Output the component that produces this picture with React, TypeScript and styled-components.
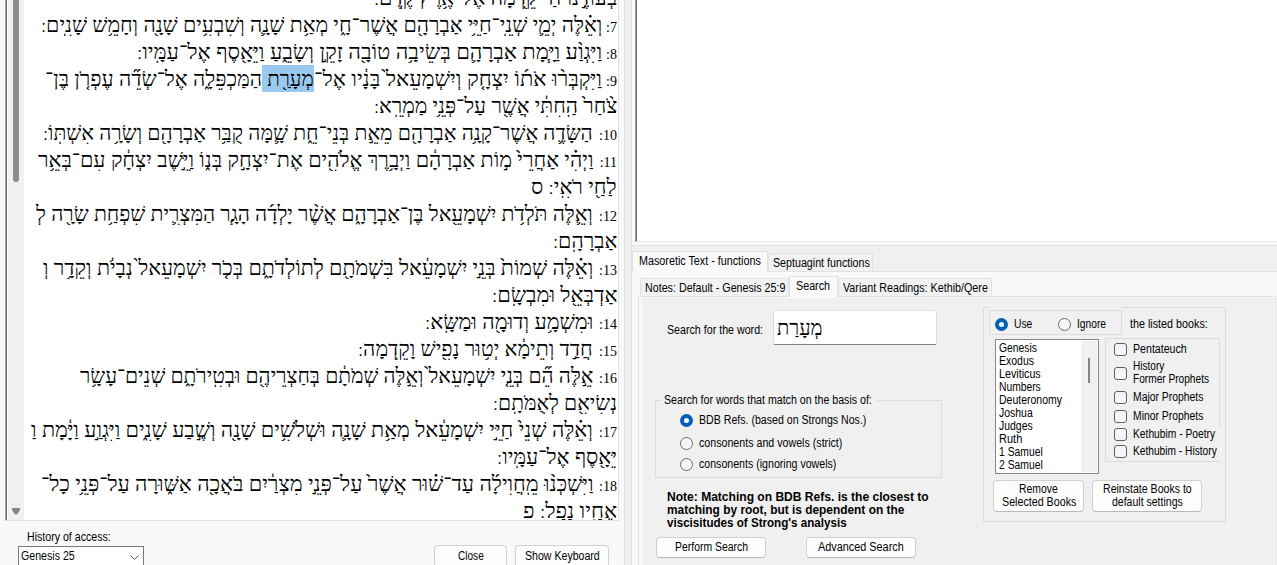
import React, { useLayoutEffect, useRef, useState } from "react";
import styled, { createGlobalStyle } from "styled-components";

const GlobalStyle = createGlobalStyle`
  * { box-sizing: border-box; }
  html, body { margin: 0; padding: 0; }
  body {
    width: 1277px; height: 565px; overflow: hidden; background: #f0f0f0; color: #000;
    font: 12px/13px "Liberation Sans", Arial, sans-serif;
  }
`;

/* Text condensed or widened to an exact advance width. */
const FitBox = styled.span<{ $w: number }>`
  display: block; flex: none; width: ${p => p.$w}px; white-space: pre;
`;
const FitInner = styled.span<{ $rtl?: boolean }>`
  display: inline-block; white-space: pre;
  transform-origin: ${p => (p.$rtl ? "right" : "left")} center;
`;
function Fit({ w, rtl, children }: { w: number; rtl?: boolean; children: React.ReactNode }) {
  const ref = useRef<HTMLSpanElement>(null);
  const [scale, setScale] = useState(1);
  useLayoutEffect(() => {
    const natural = ref.current?.offsetWidth;
    if (natural) setScale(w / natural);
  }, [w]);
  return (
    <FitBox $w={w}>
      <FitInner ref={ref} $rtl={rtl} style={{ transform: `scaleX(${scale})` }}>{children}</FitInner>
    </FitBox>
  );
}

const Window = styled.div`display: flex; width: 1277px; height: 565px; overflow: hidden;`;

const ReaderPane = styled.section`
  width: 625px; flex: none; background: #f9f9f9; border-right: 1px solid #e3e3e3;
  display: flex; flex-direction: column;
`;
const TextView = styled.div`
  margin-left: 5px; width: 614px; height: 521px; display: flex; background: #fff;
  border-left: 1px solid #a0a0a0; border-right: 1px solid #e3e3e3; border-bottom: 1px solid #e3e3e3;
  box-shadow: inset 1px 0 #696969; padding-left: 2px;
`;
const Track = styled.div`
  width: 16px; background: #f0f0f0; display: flex; flex-direction: column;
  align-items: center; justify-content: space-between; flex: none;
`;
const Thumb = styled.div`width: 6px; height: 182px; background: #8b8b8b; border-radius: 0 0 3px 3px;`;
const Verses = styled.div`
  flex: 1; height: 520px; overflow: hidden; direction: rtl; padding-right: 1px;
`;
const VerseBody = styled.div`margin-top: -16px;`;
const Line = styled.div`
  display: flex; height: 27px; line-height: 29px; align-items: baseline;
  font-family: "Liberation Serif", "Times New Roman", serif; font-size: 21px;
`;
const VerseNo = styled.span<{ $w: number }>`
  flex: none; width: ${p => p.$w}px; font-size: 14px; line-height: 29px;
`;
const Selected = styled.mark`
  display: block; height: 27px; background: #99c9ef; color: inherit; white-space: pre;
`;
const VerseEnd = styled.span`
  display: inline-block; font: 17px/20px "DejaVu Sans", sans-serif;
`;
const ReaderFooter = styled.div`display: flex; padding: 9px 0 0 18px; height: 60px;`;
const History = styled.div`width: 416px;`;
const HistoryLabel = styled.div`padding: 1px 0 0 9px; height: 16px;`;
const Combo = styled.div`
  width: 126px; height: 24px; border: 1px solid #7a7a7a; background: #fff;
  display: flex; align-items: flex-start; justify-content: space-between; padding: 3px 4px 0 2px;
`;
const ButtonRow = styled.div`display: flex; gap: 8px; padding-top: 15px;`;

const Button = styled.button<{ $w: number; $h: number }>`
  width: ${p => p.$w}px; height: ${p => p.$h}px; flex: none; padding: 0; font: inherit; color: #000;
  background: #fdfdfd; border: 1px solid #d0d0d0; border-bottom-color: #bababa; border-radius: 4px;
  display: flex; flex-direction: column; align-items: center; justify-content: center;
`;

const RightPane = styled.section`
  flex: 1; margin-left: 6px; border-left: 1px solid #e3e3e3; display: flex; flex-direction: column;
`;
const Viewer = styled.div`
  height: 246px; background: #f9f9f9; border-bottom: 1px solid #e3e3e3; padding: 0 0 3px 3px; flex: none;
`;
const ViewerBody = styled.div`
  height: 242px; background: #fff; border-left: 1px solid #a0a0a0; border-bottom: 1px solid #e3e3e3;
  box-shadow: inset 1px 0 #696969;
`;
const TabStrip = styled.div<{ $top: number; $left: number }>`
  display: flex; align-items: flex-end; padding: ${p => p.$top}px 0 0 ${p => p.$left}px;
`;
const Tab = styled.div<{ $w: number; $on?: boolean }>`
  width: ${p => p.$w}px; height: ${p => (p.$on ? 21 : 18)}px; flex: none;
  margin-bottom: ${p => (p.$on ? -1 : 0)}px; position: relative;
  background: ${p => (p.$on ? "#f9f9f9" : "#f2f2f2")};
  border: 1px solid #e2e2e2; border-bottom: 0;
  padding: 3px 0 0 ${p => (p.$on ? 6 : 4)}px;
`;
const OuterPage = styled.div`
  flex: 1; background: #f9f9f9; border-top: 1px solid #e2e2e2;
  display: flex; flex-direction: column;
`;
const InnerPage = styled.div`
  flex: 1; margin: 0 1px 0 6px; border: 1px solid #e2e2e2; border-bottom: 0;
  padding: 1px 1px 0 3px; display: flex;
`;
const SearchPanel = styled.div`flex: 1; background: #f0f0f0; display: flex; align-items: flex-start;`;
const SearchColumn = styled.div`width: 341px; flex: none; padding: 12px 0 0 13px;`;
const WordRow = styled.div`display: flex; align-items: flex-start; height: 35px; padding-left: 12px; gap: 10px;`;
const WordLabel = styled.div`padding-top: 14px;`;
const WordInput = styled.div`
  width: 164px; height: 35px; background: #fff; border: 1px solid #dedede;
  border-bottom-color: #808080; border-radius: 2px; padding: 4px 0 0 3px;
  font: 21px/27px "Liberation Serif", serif;
`;
const MatchGroup = styled.fieldset`
  width: 287px; height: 84px; margin: 49px 0 0; padding: 0; border: 1px solid #dcdcdc; min-width: 0;
`;
const Legend = styled.legend`margin-left: 5px; padding: 0 5px 0 3px; height: 13px;`;
const Choice = styled.label<{ $top?: number; $left?: number; $gap?: number }>`
  display: flex; align-items: center; gap: ${p => p.$gap ?? 6}px;
  margin-top: ${p => p.$top ?? 0}px; margin-left: ${p => p.$left ?? 0}px;
`;
const Radio = styled.i<{ $on?: boolean }>`
  width: 13px; height: 13px; flex: none; border-radius: 50%;
  border: ${p => (p.$on ? "4px solid #005fb8" : "1px solid #6a6a6a")};
  background: ${p => (p.$on ? "#fff" : "#f6f6f6")};
`;
const Check = styled.i`
  width: 13px; height: 13px; flex: none; border: 1px solid #5f5f5f; border-radius: 3px; background: #f6f6f6;
`;
const Note = styled.div`font-weight: bold; padding: 13px 0 0 12px; height: 59px;`;
const SearchButtons = styled.div`display: flex; gap: 40px; padding-left: 1px;`;

const BooksGroup = styled.div`
  width: 243px; height: 215px; margin-top: 9px; flex: none; padding: 0 0 0 5px;
  border: 1px solid #dcdcdc; border-top: 0;
  background: linear-gradient(#dcdcdc, #dcdcdc) left top / 5px 1px no-repeat,
    linear-gradient(#dcdcdc, #dcdcdc) right top / 104px 1px no-repeat;
`;
const ScopeRow = styled.div`display: flex; padding-top: 3px; gap: 8px; align-items: center;`;
const ScopeBox = styled.div`
  width: 133px; height: 25px; border: 1px solid #dcdcdc; display: flex; align-items: center; padding: 3px 0 0 5px;
`;
const BooksRow = styled.div`display: flex; padding: 3px 0 0 6px; gap: 6px; align-items: flex-start;`;
const BookList = styled.div`
  width: 104px; height: 135px; margin-top: 1px; background: #fff; border: 1px solid #828790;
  display: flex; justify-content: space-between; padding: 1px;
`;
const BookNames = styled.div`padding: 1px 0 0 2px;`;
const ListTrack = styled.div`width: 16px; background: #f0f0f0; padding: 17px 0 0 7px;`;
const ListThumb = styled.div`width: 2px; height: 25px; background: #858585;`;
const CategoryBox = styled.div`
  width: 115px; height: 124px; border: 1px solid #dcdcdc; border-right: 0; padding: 4px 0 0 8px;
  background: linear-gradient(#dcdcdc, #dcdcdc) right top / 1px 88px no-repeat;
`;
const BookButtons = styled.div`display: flex; padding: 6px 0 0 4px; gap: 8px;`;

type Part = { text: string; w: number; selected?: boolean };
type Verse = { no?: string; left: number; text?: string; parts?: Part[] };
const verses: Verse[] = [
  { left: 374, text: "בְּעוֹדֶ֣נּוּ חַ֔י קֵ֖דְמָה אֶל־אֶ֥רֶץ קֶֽדֶם׃" },
  { no: "7", left: 41, text: "וְאֵ֗לֶּה יְמֵ֛י שְׁנֵֽי־חַיֵּ֥י אַבְרָהָ֖ם אֲשֶׁר־חָ֑י מְאַ֥ת שָׁנָ֛ה וְשִׁבְעִ֥ים שָׁנָ֖ה וְחָמֵ֥שׁ שָׁנִֽים׃" },
  { no: "8", left: 137, text: "וַיִּגְוַ֨ע וַיָּ֧מָת אַבְרָהָ֛ם בְּשֵׂיבָ֥ה טוֹבָ֖ה זָקֵ֣ן וְשָׂבֵ֑עַ וַיֵּאָ֖סֶף אֶל־עַמָּֽיו׃" },
  {
    no: "9", left: 45, parts: [
      { w: 288, text: "וַיִּקְבְּר֨וּ אֹת֜וֹ יִצְחָ֤ק וְיִשְׁמָעֵאל֙ בָּנָ֔יו אֶל־" },
      { w: 52, selected: true, text: "מְעָרַ֖ת " },
      { w: 217, text: "הַמַּכְפֵּלָ֑ה אֶל־שְׂדֵ֞ה עֶפְרֹ֤ן בֶּן־" },
    ],
  },
  { left: 374, text: "צֹ֨חַר֙ הַֽחִתִּ֔י אֲשֶׁ֖ר עַל־פְּנֵ֥י מַמְרֵֽא׃" },
  { no: "10", left: 43, text: "הַשָּׂדֶ֛ה אֲשֶׁר־קָנָ֥ה אַבְרָהָ֖ם מֵאֵ֣ת בְּנֵי־חֵ֑ת שָׁ֛מָּה קֻבַּ֥ר אַבְרָהָ֖ם וְשָׂרָ֥ה אִשְׁתּֽוֹ׃" },
  { no: "11", left: 38, text: "וַיְהִ֗י אַחֲרֵי֙ מ֣וֹת אַבְרָהָ֔ם וַיְבָ֥רֶךְ אֱלֹהִ֖ים אֶת־יִצְחָ֣ק בְּנ֑וֹ וַיֵּ֣שֶׁב יִצְחָ֔ק עִם־בְּאֵ֥ר" },
  { left: 531, text: "לַחַ֖י רֹאִֽי׃ ס" },
  { no: "12", left: 36, text: "וְאֵ֛לֶּה תֹּלְדֹ֥ת יִשְׁמָעֵ֖אל בֶּן־אַבְרָהָ֑ם אֲשֶׁ֨ר יָלְדָ֜ה הָגָ֧ר הַמִּצְרִ֛ית שִׁפְחַ֥ת שָׂרָ֖ה לְ" },
  { left: 553, text: "אַבְרָהָֽם׃" },
  { no: "13", left: 43, text: "וְאֵ֗לֶּה שְׁמוֹת֙ בְּנֵ֣י יִשְׁמָעֵ֔אל בִּשְׁמֹתָ֖ם לְתוֹלְדֹתָ֑ם בְּכֹ֤ר יִשְׁמָעֵאל֙ נְבָיֹ֔ת וְקֵדָ֥ר וְ" },
  { left: 492, text: "אַדְבְּאֵ֖ל וּמִבְשָֽׂם׃" },
  { no: "14", left: 425, text: "וּמִשְׁמָ֥ע וְדוּמָ֖ה וּמַשָּֽׂא׃" },
  { no: "15", left: 358, text: "חֲדַ֣ד וְתֵימָ֔א יְט֥וּר נָפִ֖ישׁ וָקֵֽדְמָה׃" },
  { no: "16", left: 80, text: "אֵ֣לֶּה הֵ֞ם בְּנֵ֤י יִשְׁמָעֵאל֙ וְאֵ֣לֶּה שְׁמֹתָ֔ם בְּחַצְרֵיהֶ֖ם וּבְטִֽירֹתָ֑ם שְׁנֵים־עָשָׂ֥ר" },
  { left: 493, text: "נְשִׂיאִ֖ם לְאֻמֹּתָֽם׃" },
  { no: "17", left: 31, text: "וְאֵ֗לֶּה שְׁנֵי֙ חַיֵּ֣י יִשְׁמָעֵ֔אל מְאַ֥ת שָׁנָ֛ה וּשְׁלֹשִׁ֥ים שָׁנָ֖ה וְשֶׁ֣בַע שָׁנִ֑ים וַיִּגְוַ֣ע וַיָּ֔מָת וַ" },
  { left: 497, text: "יֵּאָ֖סֶף אֶל־עַמָּֽיו׃" },
  { no: "18", left: 41, text: "וַיִּשְׁכְּנ֨וּ מֵֽחֲוִילָ֜ה עַד־שׁ֗וּר אֲשֶׁר֙ עַל־פְּנֵ֣י מִצְרַ֔יִם בֹּאֲכָ֖ה אַשּׁ֑וּרָה עַל־פְּנֵ֥י כָל־" },
  { left: 523, text: "אֶחָ֖יו נָפָֽל׃ פ" },
];

const books: [string, number][] = [
  ["Genesis", 38], ["Exodus", 35], ["Leviticus", 42], ["Numbers", 42], ["Deuteronomy", 63],
  ["Joshua", 34], ["Judges", 34], ["Ruth", 23], ["1 Samuel", 44], ["2 Samuel", 44],
];

/* The sof pasuq stands a little apart from the last word of its verse. */
function withVerseEnd(text: string) {
  const [body, tail] = text.split("׃");
  if (tail === undefined) return text;
  return <>{body}<VerseEnd>׃</VerseEnd>{tail}</>;
}

function VerseLine({ no, left, text, parts }: Verse) {
  const noWidth = no ? (no.length === 1 ? 15 : 24) : 0;
  return (
    <Line>
      {no && <VerseNo $w={noWidth}>{no}:</VerseNo>}
      {text && <Fit rtl w={617 - noWidth - left}>{withVerseEnd(text)}</Fit>}
      {parts?.map((p, i) => {
        const fitted = <Fit rtl key={i} w={p.w}>{p.text}</Fit>;
        return p.selected ? <Selected key={i}>{fitted}</Selected> : fitted;
      })}
    </Line>
  );
}

export default function App() {
  return (
    <>
      <GlobalStyle />
      <Window>
        <ReaderPane>
          <TextView>
            <Track>
              <Thumb />
              <svg width="10" height="12" viewBox="0 0 10 12"><path d="M1 0h8v2L6 6.500H4L1 2z" fill="#858585" /></svg>
            </Track>
            <Verses>
              <VerseBody>{verses.map((v, i) => <VerseLine key={i} {...v} />)}</VerseBody>
            </Verses>
          </TextView>
          <ReaderFooter>
            <History>
              <HistoryLabel><Fit w={84}>History of access:</Fit></HistoryLabel>
              <Combo>
                <Fit w={54}>Genesis 25</Fit>
                <svg width="9" height="12" viewBox="0 0 9 12"><path d="M.5 5.500 4.500 9.500 8.500 5.500" fill="none" stroke="#555" /></svg>
              </Combo>
            </History>
            <ButtonRow>
              <Button $w={73} $h={22}><Fit w={26}>Close</Fit></Button>
              <Button $w={94} $h={22}><Fit w={75}>Show Keyboard</Fit></Button>
            </ButtonRow>
          </ReaderFooter>
        </ReaderPane>

        <RightPane>
          <Viewer><ViewerBody /></Viewer>
          <TabStrip $top={5} $left={0}>
            <Tab $w={136} $on><Fit w={122}>Masoretic Text - functions</Fit></Tab>
            <Tab $w={105}><Fit w={97}>Septuagint functions</Fit></Tab>
          </TabStrip>
          <OuterPage>
            <TabStrip $top={4} $left={8}>
              <Tab $w={149}><Fit w={140}>Notes: Default - Genesis 25:9</Fit></Tab>
              <Tab $w={49} $on><Fit w={34}>Search</Fit></Tab>
              <Tab $w={154}><Fit w={145}>Variant Readings: Kethib/Qere</Fit></Tab>
            </TabStrip>
            <InnerPage>
              <SearchPanel>
                <SearchColumn>
                  <WordRow>
                    <WordLabel><Fit w={96}>Search for the word:</Fit></WordLabel>
                    <WordInput><Fit w={45}>מְעָרַת</Fit></WordInput>
                  </WordRow>
                  <MatchGroup>
                    <Legend><Fit w={208}>Search for words that match on the basis of:</Fit></Legend>
                    <Choice $top={7} $left={24}><Radio $on /><Fit w={167}>BDB Refs. (based on Strongs Nos.)</Fit></Choice>
                    <Choice $top={10} $left={24}><Radio /><Fit w={143}>consonents and vowels (strict)</Fit></Choice>
                    <Choice $top={8} $left={24}><Radio /><Fit w={137}>consonents (ignoring vowels)</Fit></Choice>
                  </MatchGroup>
                  <Note>
                    <Fit w={262}>Note: Matching on BDB Refs. is the closest to</Fit>
                    <Fit w={237}>matching by root, but is dependent on the</Fit>
                    <Fit w={180}>viscisitudes of Strong's analysis</Fit>
                  </Note>
                  <SearchButtons>
                    <Button $w={110} $h={21}><Fit w={73}>Perform Search</Fit></Button>
                    <Button $w={110} $h={21}><Fit w={86}>Advanced Search</Fit></Button>
                  </SearchButtons>
                </SearchColumn>

                <BooksGroup>
                  <ScopeRow>
                    <ScopeBox>
                      <Choice><Radio $on /><Fit w={18}>Use</Fit></Choice>
                      <Choice $left={26}><Radio /><Fit w={29}>Ignore</Fit></Choice>
                    </ScopeBox>
                    <Choice $top={3}><Fit w={78}>the listed books:</Fit></Choice>
                  </ScopeRow>
                  <BooksRow>
                    <BookList>
                      <BookNames>{books.map(([name, w]) => <Fit key={name} w={w}>{name}</Fit>)}</BookNames>
                      <ListTrack><ListThumb /></ListTrack>
                    </BookList>
                    <CategoryBox>
                      <Choice><Check /><Fit w={54}>Pentateuch</Fit></Choice>
                      <Choice $top={4}>
                        <Check />
                        <span><Fit w={31}>History</Fit><Fit w={76}>Former Prophets</Fit></span>
                      </Choice>
                      <Choice $top={5}><Check /><Fit w={70}>Major Prophets</Fit></Choice>
                      <Choice $top={6}><Check /><Fit w={70}>Minor Prophets</Fit></Choice>
                      <Choice $top={5}><Check /><Fit w={82}>Kethubim - Poetry</Fit></Choice>
                      <Choice $top={4}><Check /><Fit w={84}>Kethubim - History</Fit></Choice>
                    </CategoryBox>
                  </BooksRow>
                  <BookButtons>
                    <Button $w={91} $h={32}><Fit w={39}>Remove</Fit><Fit w={74}>Selected Books</Fit></Button>
                    <Button $w={110} $h={32}><Fit w={89}>Reinstate Books to</Fit><Fit w={71}>default settings</Fit></Button>
                  </BookButtons>
                </BooksGroup>
              </SearchPanel>
            </InnerPage>
          </OuterPage>
        </RightPane>
      </Window>
    </>
  );
}
